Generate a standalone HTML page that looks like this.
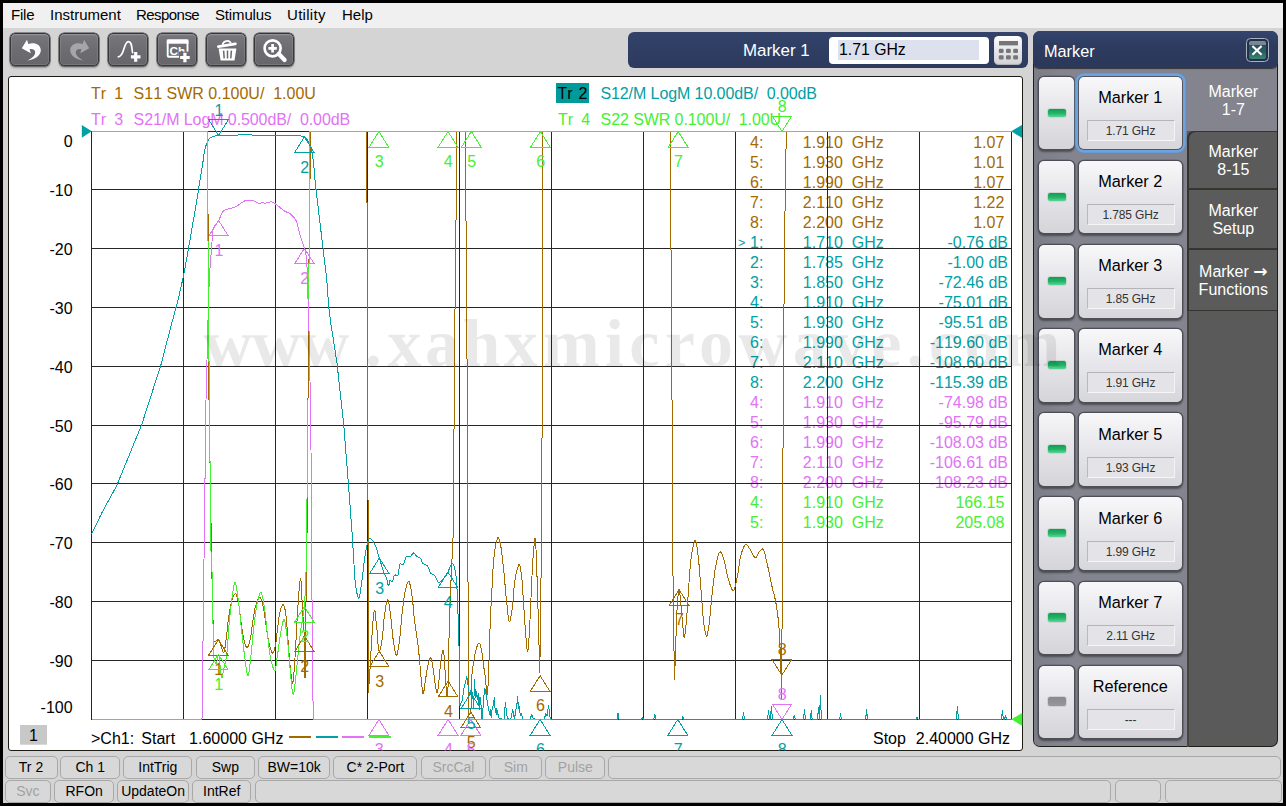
<!DOCTYPE html>
<html><head><meta charset="utf-8"><title>Network Analyzer</title>
<style>
html,body{margin:0;padding:0}
body{width:1286px;height:806px;overflow:hidden;background:#000;position:relative;font-family:"Liberation Sans",Arial,sans-serif;}
.abs{position:absolute}
#app{position:absolute;left:3px;top:3px;width:1280px;height:800px;background:#d4d4d4}
#menubar{position:absolute;left:3px;top:3px;width:1280px;height:25px;background:#f0f0f0}
.mi{position:absolute;top:3px;font-size:15px;line-height:18px;color:#000;white-space:pre}
.tb{position:absolute;top:33px;width:38px;height:31px;border:1px solid #38383c;border-radius:5px;background:linear-gradient(#78787c,#6d6d71 50%,#67676b);box-shadow:0 0 0 .5px #38383c, 0 2px 2px rgba(0,0,0,.3), inset 0 0 0 1px rgba(255,255,255,.1), inset 0 1.5px 0 rgba(255,255,255,.1)}
.tb svg{position:absolute;left:0;top:0}
#entry{position:absolute;left:628px;top:32px;width:399.5px;height:36px;border-radius:6px;background:linear-gradient(#324269,#2c3a5d)}
#entry .lab{position:absolute;left:115px;top:8.5px;font-size:16.9px;line-height:20px;color:#fff;white-space:pre}
#entry .inp{position:absolute;left:200.5px;top:5px;width:160.5px;height:26.5px;border-radius:4px;background:#fff}
#entry .sel{position:absolute;left:9.5px;top:3px;width:141px;height:19.5px;background:#dde1ee}
#entry .val{position:absolute;left:10.5px;top:3px;font-size:15.8px;line-height:20px;color:#000;white-space:pre}
#kp{position:absolute;left:365.5px;top:4.2px;width:28.5px;height:28.5px;border-radius:4.5px;background:linear-gradient(#fdfdfe,#e4e4e8 55%,#d2d2d7);box-shadow:inset 0 -1px 1px rgba(0,0,0,.18)}
#plot{position:absolute;left:8px;top:76px;width:1013px;height:672.8px;border:1px solid #1c1c14;border-radius:3px;background:#fff}
#psvg{position:absolute;left:0;top:0}
#wm{position:absolute;left:203.3px;top:302.5px;font-family:"Liberation Serif","DejaVu Serif",serif;font-weight:bold;font-size:68px;line-height:80px;letter-spacing:5.3px;color:rgba(0,0,0,.085);white-space:pre;z-index:50;pointer-events:none}
#mp{position:absolute;left:1033px;top:31px;width:245px;height:715.7px;border-radius:7px;background:#1e1e18;overflow:hidden}
#mph{position:absolute;left:0;top:0;width:245px;height:36.5px;background:linear-gradient(#34446c,#2d3b5f 40%,#2b385a);border-radius:6px 6px 6px 6px;z-index:3;box-shadow:0 1px 1px rgba(0,0,0,.6)}
#mph .t{position:absolute;left:11px;top:9.5px;font-size:16.3px;line-height:20px;color:#fff}
#mpx{position:absolute;left:213px;top:7px;width:20.5px;height:21.5px;border:1.5px solid #a9b1c1;border-radius:4.5px;background:#22304a}
#mpx i{position:absolute;left:1.5px;top:1.5px;width:17.5px;height:18.5px;border-radius:2px;background:linear-gradient(#7b8b98 0,#76868f 22%,#2a4f5e 24%,#2b5d62 60%,#3a8574)}
#mpl{position:absolute;left:1px;top:30px;width:153px;height:684.7px;background:linear-gradient(90deg,#7d7d88,#84848f 20%,#84848f);border-radius:0 0 0 5px}
#mpr{position:absolute;left:154px;top:30px;width:90px;height:684.7px;background:#5a5a5a;border-radius:0 0 6px 0}
.led{position:absolute;left:6px;width:34.5px;height:72.3px;border-radius:5px;background:linear-gradient(#f6f6f8,#e6e6ea 45%,#d4d4d9);box-shadow:0 0 0 1.3px #4e4e57, 0 1.5px 2px 1px rgba(0,0,0,.4)}
.led i{position:absolute;left:7.8px;top:30.6px;width:18px;height:8.5px;border-radius:3px;border:1px solid #c9d6cf;background:linear-gradient(#139c52,#22b568 55%,#5fd39a)}
.led i.off{background:linear-gradient(#8a8a8e,#98989c);border-color:#d0d0d4}
.mb{position:absolute;left:46px;width:102.5px;height:72.3px;border-radius:5px;background:linear-gradient(#f8f8fa,#e8e8ec 45%,#d6d6db);box-shadow:0 0 0 1.3px #4e4e57, 0 1.5px 2px 1px rgba(0,0,0,.4)}
.mb.foc{box-shadow:0 0 0 1px #55555e, 0 0 0 3.7px #6fa1dc, 0 0 0 4.3px #5b88c0}
.mb .n{position:absolute;left:0;width:100%;top:10.2px;text-align:center;font-size:16.3px;line-height:20px;color:#000}
.mb .v{position:absolute;left:7.5px;top:43.2px;width:88px;height:21px;background:#e4e4e8;border:1px solid;border-color:#b4b4ba #f4f4f6 #f6f6f8 #b8b8be;box-sizing:border-box;text-align:center;font-size:12px;line-height:21px;color:#333;letter-spacing:-0.15px}
.tab{position:absolute;left:155.3px;width:90px;color:#fff;font-size:16px;line-height:18px;text-align:center}
.tab span{position:absolute;left:0;width:100%;text-align:center;white-space:pre}
.sb{position:absolute;height:20.5px;border:1px solid #a8a8a8;border-radius:5px;background:#d8d8d8;box-sizing:content-box;font-size:14px;line-height:20px;text-align:center;color:#000;white-space:pre}
.sb.dis{color:#a2a2a2}
</style></head><body>
<div id="app"></div>
<div id="menubar">
<span class="mi" style="left:8px;letter-spacing:-0.2px">File</span>
<span class="mi" style="left:47px;letter-spacing:0px">Instrument</span>
<span class="mi" style="left:133px;letter-spacing:-0.55px">Response</span>
<span class="mi" style="left:212px;letter-spacing:-0.15px">Stimulus</span>
<span class="mi" style="left:284px;letter-spacing:0.3px">Utility</span>
<span class="mi" style="left:339px;letter-spacing:0px">Help</span>
</div>
<div class="tb" style="left:10.3px"><svg width="40" height="33" viewBox="0 0 40 33"><path d="M10.8 14.3 L16 5.8 L17.3 10 C24 8 29.6 11 29.8 16 C30 21.5 24 25.5 16.3 26.6 C21 24.5 24.3 21.5 24.2 18.3 C24.1 15.6 21.6 14.6 18.6 15.1 L19.8 19.2 Z" fill="#fff"/></svg></div>
<div class="tb" style="left:59.1px"><svg width="40" height="33" viewBox="0 0 40 33"><path d="M29.2 14.3 L24 5.8 L22.7 10 C16 8 10.4 11 10.2 16 C10 21.5 16 25.5 23.7 26.6 C19 24.5 15.7 21.5 15.8 18.3 C15.9 15.6 18.4 14.6 21.4 15.1 L20.2 19.2 Z" fill="#a6a6a8"/></svg></div>
<div class="tb" style="left:107.9px"><svg width="40" height="33" viewBox="0 0 40 33"><path d="M9.3 22.8 C15.5 22.8 14.5 7.6 19.4 7.6 C23.3 7.6 22.5 14 23.6 18.6" fill="none" stroke="#fff" stroke-width="1.7" stroke-linecap="round"/><path d="M21.9 22.9h9.6M26.7 18.1v9.6" stroke="#fff" stroke-width="3.2"/></svg></div>
<div class="tb" style="left:156.7px"><svg width="40" height="33" viewBox="0 0 40 33"><rect x="9.7" y="6.4" width="19.8" height="16.4" rx="1" fill="none" stroke="#fff" stroke-width="1.9"/><rect x="8.8" y="5.5" width="21.6" height="4.2" fill="#fff"/><text x="11.6" y="20.7" font-family="Liberation Sans,Arial,sans-serif" font-weight="bold" font-size="11.8" fill="#fff">Ch</text><rect x="21" y="17.6" width="12" height="12" fill="#6b6b6f"/><path d="M22.1 23.5h9.6M26.9 18.7v9.6" stroke="#fff" stroke-width="3.2"/></svg></div>
<div class="tb" style="left:205.5px"><svg width="40" height="33" viewBox="0 0 40 33"><path d="M11.4 12.6 L28.4 9.8" stroke="#fff" stroke-width="2.8" stroke-linecap="round"/><path d="M15.6 10.8 C16 6.5 22.5 5.6 23.8 9.4" fill="none" stroke="#fff" stroke-width="1.7"/><path d="M11.6 14.4 L29.4 14.4 L27.5 26.5 L13.6 26.5 Z" fill="#fff"/><path d="M16.6 16.6 L17.2 24.4 M20.5 16.6 L20.5 24.4 M24.4 16.6 L23.8 24.4" stroke="#6b6b6f" stroke-width="1.5"/></svg></div>
<div class="tb" style="left:254.3px"><svg width="40" height="33" viewBox="0 0 40 33"><circle cx="17.6" cy="14.3" r="8" fill="none" stroke="#fff" stroke-width="2.7"/><path d="M23.8 20 L29.6 26" stroke="#fff" stroke-width="4.2" stroke-linecap="round"/><path d="M13.4 14.3h8.4M17.6 10.1v8.4" stroke="#fff" stroke-width="2.7"/></svg></div>
<div id="entry"><span class="lab">Marker 1</span><div class="inp"><div class="sel"></div><span class="val">1.71 GHz</span></div><div id="kp"><svg width="29" height="29" viewBox="0 0 29 29"><rect x="5" y="5" width="19" height="4.4" fill="#767678"/>
<rect x="4.8" y="12.7" width="4.8" height="4.2" rx="1.2" fill="#767678"/>
<rect x="12.0" y="12.7" width="4.8" height="4.2" rx="1.2" fill="#767678"/>
<rect x="19.2" y="12.7" width="4.8" height="4.2" rx="1.2" fill="#767678"/>
<rect x="4.8" y="19.3" width="4.8" height="4.2" rx="1.2" fill="#767678"/>
<rect x="12.0" y="19.3" width="4.8" height="4.2" rx="1.2" fill="#767678"/>
<rect x="19.2" y="19.3" width="4.8" height="4.2" rx="1.2" fill="#767678"/>
</svg></div></div>
<div id="plot"></div>
<svg id="psvg" width="1286" height="806" viewBox="0 0 1286 806" font-family="Liberation Sans,Arial,sans-serif" font-size="16" style="font-kerning:none">
<defs><clipPath id="pc"><rect x="9" y="77" width="1013.5" height="673.5"/></clipPath></defs><g clip-path="url(#pc)">
<text x="91" y="98.6" fill="#a36a00" xml:space="preserve">Tr</text><text x="114.3" y="98.6" fill="#a36a00">1</text><text x="133.6" y="98.6" fill="#a36a00" letter-spacing="0" xml:space="preserve">S11 SWR 0.100U/  1.00U</text>
<text x="91" y="125" fill="#e272f6" xml:space="preserve">Tr</text><text x="114.3" y="125" fill="#e272f6">3</text><text x="133.6" y="125" fill="#e272f6" letter-spacing="-0.085" xml:space="preserve">S21/M LogM 0.500dB/  0.00dB</text>
<rect x="556" y="83" width="33" height="20" fill="#009a9a"/>
<text x="557.4" y="98.6" fill="#000">Tr</text><text x="578.4" y="98.6" fill="#000">2</text>
<text x="600.4" y="98.6" fill="#00a0a4" letter-spacing="-0.085" xml:space="preserve">S12/M LogM 10.00dB/  0.00dB</text>
<text x="558" y="125" fill="#44f030" xml:space="preserve">Tr</text><text x="581.3" y="125" fill="#44f030">4</text><text x="600.6" y="125" fill="#44f030" letter-spacing="-0.085" xml:space="preserve">S22 SWR 0.100U/  1.00U</text>
<text x="72.6" y="147.3" text-anchor="end" fill="#000">0</text>
<text x="72.6" y="196.2" text-anchor="end" fill="#000">-10</text>
<text x="72.6" y="255.2" text-anchor="end" fill="#000">-20</text>
<text x="72.6" y="314.2" text-anchor="end" fill="#000">-30</text>
<text x="72.6" y="373.2" text-anchor="end" fill="#000">-40</text>
<text x="72.6" y="432.2" text-anchor="end" fill="#000">-50</text>
<text x="72.6" y="490.2" text-anchor="end" fill="#000">-60</text>
<text x="72.6" y="549.2" text-anchor="end" fill="#000">-70</text>
<text x="72.6" y="608.2" text-anchor="end" fill="#000">-80</text>
<text x="72.6" y="667.2" text-anchor="end" fill="#000">-90</text>
<text x="72.6" y="713.2" text-anchor="end" fill="#000">-100</text>
<text x="750" y="147.7" fill="#a36a00">4:</text><text x="802.8" y="147.7" fill="#a36a00" xml:space="preserve">1.910  GHz</text><text x="1008.8" y="147.7" fill="#a36a00" text-anchor="end" xml:space="preserve">1.07 </text>
<text x="750" y="167.7" fill="#a36a00">5:</text><text x="802.8" y="167.7" fill="#a36a00" xml:space="preserve">1.930  GHz</text><text x="1008.8" y="167.7" fill="#a36a00" text-anchor="end" xml:space="preserve">1.01 </text>
<text x="750" y="187.7" fill="#a36a00">6:</text><text x="802.8" y="187.7" fill="#a36a00" xml:space="preserve">1.990  GHz</text><text x="1008.8" y="187.7" fill="#a36a00" text-anchor="end" xml:space="preserve">1.07 </text>
<text x="750" y="207.8" fill="#a36a00">7:</text><text x="802.8" y="207.8" fill="#a36a00" xml:space="preserve">2.110  GHz</text><text x="1008.8" y="207.8" fill="#a36a00" text-anchor="end" xml:space="preserve">1.22 </text>
<text x="750" y="227.8" fill="#a36a00">8:</text><text x="802.8" y="227.8" fill="#a36a00" xml:space="preserve">2.200  GHz</text><text x="1008.8" y="227.8" fill="#a36a00" text-anchor="end" xml:space="preserve">1.07 </text>
<text x="738" y="246.8" fill="#00a0a4" font-size="12.5">&gt;</text>
<text x="750" y="247.8" fill="#00a0a4">1:</text><text x="802.8" y="247.8" fill="#00a0a4" xml:space="preserve">1.710  GHz</text><text x="1008" y="247.8" fill="#00a0a4" text-anchor="end" xml:space="preserve">-0.76 dB</text>
<text x="750" y="267.8" fill="#00a0a4">2:</text><text x="802.8" y="267.8" fill="#00a0a4" xml:space="preserve">1.785  GHz</text><text x="1008" y="267.8" fill="#00a0a4" text-anchor="end" xml:space="preserve">-1.00 dB</text>
<text x="750" y="287.8" fill="#00a0a4">3:</text><text x="802.8" y="287.8" fill="#00a0a4" xml:space="preserve">1.850  GHz</text><text x="1008" y="287.8" fill="#00a0a4" text-anchor="end" xml:space="preserve">-72.46 dB</text>
<text x="750" y="307.9" fill="#00a0a4">4:</text><text x="802.8" y="307.9" fill="#00a0a4" xml:space="preserve">1.910  GHz</text><text x="1008" y="307.9" fill="#00a0a4" text-anchor="end" xml:space="preserve">-75.01 dB</text>
<text x="750" y="327.9" fill="#00a0a4">5:</text><text x="802.8" y="327.9" fill="#00a0a4" xml:space="preserve">1.930  GHz</text><text x="1008" y="327.9" fill="#00a0a4" text-anchor="end" xml:space="preserve">-95.51 dB</text>
<text x="750" y="347.9" fill="#00a0a4">6:</text><text x="802.8" y="347.9" fill="#00a0a4" xml:space="preserve">1.990  GHz</text><text x="1008" y="347.9" fill="#00a0a4" text-anchor="end" xml:space="preserve">-119.60 dB</text>
<text x="750" y="367.9" fill="#00a0a4">7:</text><text x="802.8" y="367.9" fill="#00a0a4" xml:space="preserve">2.110  GHz</text><text x="1008" y="367.9" fill="#00a0a4" text-anchor="end" xml:space="preserve">-108.60 dB</text>
<text x="750" y="387.9" fill="#00a0a4">8:</text><text x="802.8" y="387.9" fill="#00a0a4" xml:space="preserve">2.200  GHz</text><text x="1008" y="387.9" fill="#00a0a4" text-anchor="end" xml:space="preserve">-115.39 dB</text>
<text x="750" y="408.0" fill="#e272f6">4:</text><text x="802.8" y="408.0" fill="#e272f6" xml:space="preserve">1.910  GHz</text><text x="1008" y="408.0" fill="#e272f6" text-anchor="end" xml:space="preserve">-74.98 dB</text>
<text x="750" y="428.0" fill="#e272f6">5:</text><text x="802.8" y="428.0" fill="#e272f6" xml:space="preserve">1.930  GHz</text><text x="1008" y="428.0" fill="#e272f6" text-anchor="end" xml:space="preserve">-95.79 dB</text>
<text x="750" y="448.0" fill="#e272f6">6:</text><text x="802.8" y="448.0" fill="#e272f6" xml:space="preserve">1.990  GHz</text><text x="1008" y="448.0" fill="#e272f6" text-anchor="end" xml:space="preserve">-108.03 dB</text>
<text x="750" y="468.0" fill="#e272f6">7:</text><text x="802.8" y="468.0" fill="#e272f6" xml:space="preserve">2.110  GHz</text><text x="1008" y="468.0" fill="#e272f6" text-anchor="end" xml:space="preserve">-106.61 dB</text>
<text x="750" y="488.0" fill="#e272f6">8:</text><text x="802.8" y="488.0" fill="#e272f6" xml:space="preserve">2.200  GHz</text><text x="1008" y="488.0" fill="#e272f6" text-anchor="end" xml:space="preserve">-108.23 dB</text>
<text x="750" y="508.1" fill="#44f030">4:</text><text x="802.8" y="508.1" fill="#44f030" xml:space="preserve">1.910  GHz</text><text x="1008.8" y="508.1" fill="#44f030" text-anchor="end" xml:space="preserve">166.15 </text>
<text x="750" y="528.1" fill="#44f030">5:</text><text x="802.8" y="528.1" fill="#44f030" xml:space="preserve">1.930  GHz</text><text x="1008.8" y="528.1" fill="#44f030" text-anchor="end" xml:space="preserve">205.08 </text>
<rect x="20" y="725" width="27" height="19.7" fill="#c8c8c8"/><text x="33.5" y="740.7" text-anchor="middle" fill="#000">1</text>
<text x="91" y="743.8" fill="#000" xml:space="preserve">&gt;Ch1:</text><text x="141.3" y="743.8" fill="#000">Start</text><text x="189.1" y="743.8" fill="#000">1.60000 GHz</text>
<text x="873" y="743.8" fill="#000">Stop</text><text x="915.8" y="743.8" fill="#000">2.40000 GHz</text>
<rect x="289" y="736" width="22" height="2" fill="#a36a00"/>
<rect x="316" y="736" width="22" height="2" fill="#00a0a4"/>
<rect x="342" y="736" width="22" height="2" fill="#e272f6"/>
<rect x="369" y="736" width="22" height="2" fill="#44f030"/>
<path d="M91.50 131.00V720.00M183.50 131.00V720.00M275.50 131.00V720.00M367.50 131.00V720.00M459.50 131.00V720.00M551.50 131.00V720.00M643.50 131.00V720.00M735.50 131.00V720.00M827.50 131.00V720.00M919.50 131.00V720.00M1011.50 131.00V720.00M91.00 131.50H1012.00M91.00 189.50H1012.00M91.00 248.50H1012.00M91.00 307.50H1012.00M91.00 366.50H1012.00M91.00 425.50H1012.00M91.00 483.50H1012.00M91.00 542.50H1012.00M91.00 601.50H1012.00M91.00 660.50H1012.00M91.00 719.50H1012.00" stroke="#262626" stroke-width="1" fill="none" shape-rendering="crispEdges"/>
<polyline points="91.6,131.5 207.0,131.5 207.1,131.7 207.1,132.4 207.2,133.5 207.2,134.9 207.2,136.4 207.3,138.2 207.3,140.1 207.3,141.9 207.4,143.8 207.4,145.5 207.4,147.0 208.4,257.0 209.0,400.0 210.6,500.0 211.5,550.0 212.4,600.0 213.7,642.0 214.6,641.6 216.0,641.0 217.3,640.1 218.4,639.6 219.1,640.1 219.6,641.2 220.1,642.8 220.5,644.5 221.0,646.0 221.6,647.6 222.1,649.3 222.7,651.0 223.2,652.2 223.6,652.7 223.9,652.4 224.3,651.6 224.6,650.4 224.8,648.8 225.1,647.0 225.3,645.2 225.6,643.3 225.8,641.6 226.0,640.0 226.2,638.5 226.4,637.1 226.6,635.6 226.8,634.1 226.9,632.7 227.1,631.2 227.3,629.7 227.4,628.2 227.6,626.8 227.7,625.3 227.9,623.8 228.0,622.3 228.2,620.9 228.4,619.4 228.6,617.9 228.8,616.5 229.0,615.0 229.2,613.6 229.4,612.2 229.6,610.8 229.9,609.5 230.1,608.1 230.4,606.7 230.6,605.3 230.9,604.0 231.3,602.6 231.6,601.3 232.0,600.0 232.5,598.5 233.2,596.8 234.0,595.2 234.8,594.1 235.4,593.6 235.9,594.0 236.5,594.9 236.9,596.3 237.4,598.0 237.8,599.7 238.2,601.5 238.5,603.0 238.8,604.4 239.0,605.9 239.2,607.3 239.4,608.8 239.6,610.2 239.8,611.7 239.9,613.2 240.1,614.7 240.3,616.1 240.4,617.6 240.6,619.1 240.8,620.5 241.0,622.0 241.2,623.4 241.4,624.8 241.6,626.2 241.8,627.6 242.0,629.0 242.2,630.4 242.4,631.8 242.6,633.2 242.9,634.5 243.1,635.9 243.4,637.3 243.7,638.7 244.0,640.0 244.4,641.5 244.8,643.2 245.4,644.8 245.9,646.3 246.5,647.3 247.0,647.7 247.5,647.3 248.1,646.3 248.6,644.8 249.2,643.2 249.6,641.5 250.0,640.0 250.3,638.6 250.6,637.2 250.8,635.8 251.1,634.4 251.3,632.9 251.4,631.5 251.6,630.1 251.8,628.6 252.0,627.2 252.2,625.7 252.3,624.3 252.5,622.9 252.8,621.4 253.0,620.0 253.2,618.6 253.5,617.1 253.7,615.7 254.0,614.2 254.2,612.8 254.5,611.3 254.7,609.9 255.0,608.5 255.3,607.1 255.7,605.7 256.1,604.3 256.5,603.0 257.0,601.6 257.7,600.1 258.4,598.7 259.1,597.7 259.7,597.3 260.3,597.6 260.8,598.5 261.3,599.8 261.8,601.3 262.3,603.0 262.7,604.6 263.0,606.0 263.3,607.4 263.6,608.9 263.9,610.3 264.1,611.8 264.3,613.2 264.6,614.7 264.8,616.2 264.9,617.6 265.1,619.1 265.3,620.6 265.5,622.1 265.8,623.5 266.0,625.0 266.2,626.4 266.5,627.9 266.7,629.3 266.9,630.8 267.1,632.2 267.3,633.6 267.5,635.1 267.8,636.5 268.0,637.9 268.3,639.4 268.6,640.8 268.8,642.2 269.2,643.6 269.5,645.0 269.9,646.6 270.4,648.4 271.0,650.2 271.6,651.8 272.2,652.9 272.7,653.3 273.2,652.9 273.7,651.8 274.3,650.2 274.7,648.4 275.2,646.6 275.5,645.0 275.8,643.6 276.0,642.2 276.2,640.8 276.4,639.4 276.6,637.9 276.7,636.5 276.9,635.1 277.0,633.6 277.2,632.2 277.3,630.7 277.5,629.3 277.6,627.9 277.8,626.4 278.0,625.0 278.2,623.6 278.4,622.2 278.6,620.9 278.7,619.5 278.9,618.1 279.1,616.7 279.4,615.4 279.6,614.0 279.9,612.6 280.2,611.3 280.5,610.0 280.9,608.7 281.4,607.2 282.0,605.9 282.5,604.9 283.0,604.5 283.5,604.9 284.0,605.9 284.5,607.3 284.9,608.9 285.2,610.6 285.5,612.0 285.7,613.4 285.9,614.9 286.1,616.3 286.3,617.8 286.4,619.3 286.6,620.7 286.7,622.2 286.8,623.7 286.9,625.2 287.0,626.6 287.2,628.1 287.3,629.6 287.3,631.1 287.4,632.6 287.5,634.1 287.7,635.6 287.8,637.0 287.9,638.5 288.0,640.0 288.1,641.4 288.2,642.9 288.4,644.3 288.5,645.7 288.6,647.1 288.7,648.6 288.8,650.0 288.9,651.4 289.0,652.9 289.1,654.3 289.2,655.7 289.3,657.2 289.4,658.6 289.5,660.0 289.7,661.4 289.8,662.9 289.9,664.3 290.1,665.7 290.2,667.2 290.3,668.6 290.5,670.0 290.7,671.5 290.9,673.1 291.1,674.9 291.3,676.7 291.5,678.4 291.8,680.0 292.0,681.4 292.2,682.5 292.4,683.2 292.6,683.5 292.8,683.3 292.9,682.7 293.1,681.8 293.3,680.5 293.4,679.1 293.6,677.4 293.7,675.7 293.9,673.8 294.0,671.9 294.1,670.0 294.3,668.2 294.4,666.5 294.5,665.0 294.6,663.5 294.7,662.1 294.8,660.6 294.9,659.1 295.0,657.7 295.1,656.2 295.2,654.7 295.3,653.2 295.3,651.8 295.4,650.3 295.5,648.8 295.6,647.4 295.7,645.9 295.8,644.4 295.8,642.9 295.9,641.5 296.0,640.0 296.1,638.5 296.2,637.1 296.2,635.6 296.3,634.2 296.4,632.7 296.5,631.2 296.6,629.8 296.6,628.3 296.7,626.9 296.8,625.4 296.9,624.0 296.9,622.5 297.0,621.0 297.1,619.6 297.2,618.1 297.3,616.7 297.3,615.2 297.4,613.7 297.5,612.3 297.6,610.8 297.7,609.4 297.8,607.9 297.9,606.5 298.0,605.0 298.1,603.4 298.2,601.7 298.4,599.9 298.5,598.1 298.6,596.1 298.8,594.2 298.9,592.2 299.1,590.3 299.2,588.4 299.4,586.6 299.5,584.9 299.7,583.3 299.8,581.9 300.0,580.7 300.1,579.8 300.3,579.0 300.4,578.6 300.5,578.4 300.6,578.5 300.7,578.9 300.8,579.5 300.9,580.3 301.0,581.3 301.1,582.5 301.2,583.8 301.3,585.2 301.4,586.8 301.5,588.5 301.6,590.3 301.6,592.1 301.7,593.9 301.8,595.9 301.9,597.8 302.0,599.7 302.1,601.6 302.1,603.4 302.2,605.2 302.3,606.9 302.4,608.5 302.5,610.0 302.6,611.4 302.7,612.9 302.8,614.3 302.9,615.7 303.0,617.1 303.1,618.6 303.2,620.0 303.3,621.4 303.4,622.9 303.5,624.3 303.6,625.7 303.7,627.1 303.8,628.6 303.9,630.0 304.0,631.4 304.1,632.9 304.2,634.3 304.2,635.7 304.3,637.1 304.4,638.6 304.4,640.0 304.4,641.5 304.5,643.1 304.5,644.8 304.5,646.6 304.6,648.4 304.6,650.3 304.6,652.2 304.6,654.2 304.7,656.1 304.7,658.1 304.7,660.0 304.7,661.9 304.8,663.7 304.8,665.5 304.8,667.3 304.8,668.9 304.8,670.5 304.8,671.9 304.9,673.2 304.9,674.4 304.9,675.5 304.9,676.3 304.9,677.0 305.0,677.6 305.0,677.9 305.0,678.0 305.0,677.9 305.0,677.6 305.1,677.0 305.1,676.3 305.1,675.5 305.1,674.4 305.1,673.2 305.2,671.9 305.2,670.5 305.2,668.9 305.2,667.3 305.2,665.5 305.3,663.7 305.3,661.9 305.3,660.0 305.3,658.1 305.3,656.1 305.3,654.2 305.4,652.2 305.4,650.3 305.4,648.4 305.4,646.6 305.4,644.8 305.5,643.1 305.5,641.5 305.5,640.0 306.7,550.0 307.6,500.0 308.0,400.0 309.0,260.0 310.2,165.0 310.2,163.5 310.2,161.9 310.2,160.1 310.2,158.3 310.2,156.5 310.3,154.6 310.3,152.6 310.3,150.7 310.3,148.8 310.3,146.9 310.3,145.0 310.3,143.2 310.3,141.4 310.3,139.8 310.3,138.2 310.3,136.8 310.3,135.5 310.3,134.3 310.3,133.4 310.4,132.6 310.4,132.0 310.4,131.6 310.4,131.5 366.8,131.5 367.3,300.0 368.0,500.0 368.4,692.6 368.4,692.3 368.5,691.5 368.6,690.3 368.7,688.7 368.8,687.0 368.9,685.1 369.1,683.3 369.2,681.5 369.3,680.0 369.4,678.6 369.5,677.2 369.6,675.8 369.7,674.4 369.8,673.0 369.9,671.6 369.9,670.2 370.0,668.8 370.1,667.4 370.2,666.0 370.3,664.5 370.4,663.0 370.5,661.6 370.5,660.1 370.6,658.6 370.7,657.1 370.8,655.7 370.9,654.2 370.9,652.7 371.0,651.2 371.1,649.8 371.2,648.3 371.2,646.8 371.3,645.3 371.4,643.8 371.5,642.4 371.6,640.9 371.7,639.4 371.8,637.9 371.9,636.5 372.0,635.0 372.1,633.5 372.2,631.8 372.4,630.0 372.5,628.1 372.6,626.2 372.8,624.3 372.9,622.4 373.1,620.5 373.3,618.7 373.4,616.9 373.6,615.4 373.7,613.9 373.9,612.7 374.1,611.7 374.3,610.9 374.4,610.5 374.6,610.3 374.8,610.6 375.0,611.4 375.2,612.5 375.4,614.1 375.5,615.8 375.7,617.7 375.9,619.7 376.1,621.6 376.3,623.4 376.5,625.0 376.7,626.5 376.8,628.2 377.0,630.0 377.1,631.8 377.3,633.8 377.4,635.7 377.5,637.7 377.6,639.6 377.8,641.4 377.9,643.2 378.1,644.9 378.2,646.4 378.4,647.8 378.5,649.0 378.7,650.0 378.9,650.7 379.1,651.1 379.3,651.3 379.6,651.0 379.9,650.1 380.3,648.7 380.7,647.1 381.1,645.2 381.4,643.4 381.7,641.6 382.0,640.0 382.2,638.5 382.4,637.1 382.6,635.6 382.7,634.2 382.9,632.7 383.0,631.2 383.1,629.7 383.2,628.3 383.3,626.8 383.5,625.3 383.6,623.8 383.7,622.3 383.8,620.9 384.0,619.4 384.1,617.9 384.3,616.5 384.5,615.0 384.7,613.5 385.0,611.7 385.2,609.9 385.5,608.0 385.8,606.1 386.2,604.4 386.5,602.8 386.8,601.4 387.1,600.3 387.4,599.6 387.7,599.4 388.0,599.6 388.2,600.3 388.5,601.4 388.8,602.8 389.1,604.4 389.3,606.1 389.6,608.0 389.8,609.9 390.1,611.7 390.3,613.5 390.5,615.0 390.7,616.4 390.9,617.8 391.0,619.3 391.2,620.7 391.3,622.1 391.5,623.5 391.6,624.9 391.8,626.4 391.9,627.8 392.0,629.2 392.2,630.7 392.3,632.1 392.4,633.5 392.6,634.9 392.8,636.3 392.9,637.8 393.1,639.2 393.3,640.6 393.5,642.0 393.7,643.5 394.0,645.1 394.3,646.9 394.5,648.7 394.9,650.4 395.2,652.0 395.5,653.4 395.8,654.4 396.1,655.1 396.4,655.4 396.7,655.2 397.0,654.5 397.3,653.4 397.6,652.1 397.9,650.5 398.2,648.7 398.5,646.9 398.8,645.0 399.1,643.2 399.3,641.5 399.5,640.0 399.7,638.6 399.9,637.2 400.0,635.7 400.2,634.3 400.3,632.9 400.5,631.5 400.6,630.0 400.8,628.6 400.9,627.2 401.0,625.7 401.1,624.3 401.2,622.9 401.4,621.4 401.5,620.0 401.6,618.6 401.7,617.1 401.9,615.7 402.0,614.3 402.2,612.9 402.3,611.4 402.5,610.0 402.7,608.6 402.8,607.1 403.0,605.7 403.2,604.2 403.4,602.8 403.6,601.4 403.8,599.9 404.0,598.5 404.2,597.1 404.4,595.6 404.7,594.2 404.9,592.8 405.2,591.4 405.5,590.0 405.8,588.6 406.2,587.0 406.7,585.3 407.2,583.8 407.7,582.5 408.2,581.6 408.6,581.3 409.0,581.6 409.4,582.5 409.8,583.7 410.2,585.3 410.6,587.0 410.9,588.8 411.2,590.5 411.5,592.0 411.7,593.5 411.9,594.9 412.1,596.4 412.3,597.8 412.5,599.3 412.7,600.8 412.8,602.3 412.9,603.7 413.1,605.2 413.2,606.7 413.3,608.2 413.5,609.7 413.6,611.1 413.7,612.6 413.9,614.1 414.0,615.6 414.2,617.1 414.3,618.5 414.5,620.0 414.7,621.5 414.9,622.9 415.1,624.4 415.3,625.9 415.5,627.4 415.7,628.8 415.9,630.3 416.1,631.8 416.3,633.2 416.5,634.7 416.8,636.2 417.0,637.6 417.2,639.1 417.4,640.6 417.6,642.0 417.8,643.5 418.0,645.0 418.2,646.5 418.3,647.9 418.5,649.4 418.7,650.9 418.8,652.3 418.9,653.8 419.1,655.2 419.2,656.7 419.3,658.1 419.5,659.6 419.6,661.1 419.7,662.5 419.8,664.0 420.0,665.4 420.1,666.9 420.2,668.3 420.3,669.8 420.5,671.3 420.6,672.7 420.7,674.2 420.9,675.6 421.0,677.1 421.1,678.5 421.3,680.0 421.5,681.5 421.6,683.3 421.8,685.2 422.0,687.0 422.1,688.9 422.3,690.6 422.5,692.0 422.7,693.2 422.9,693.9 423.1,694.2 423.3,693.9 423.5,693.2 423.8,692.0 424.0,690.6 424.3,688.9 424.5,687.0 424.8,685.2 425.0,683.3 425.3,681.5 425.5,680.0 425.7,678.6 425.9,677.3 426.1,675.9 426.3,674.5 426.5,673.1 426.7,671.8 426.9,670.4 427.2,669.0 427.4,667.7 427.7,666.3 428.0,665.0 428.3,663.6 428.8,662.0 429.3,660.5 429.7,659.1 430.2,658.2 430.6,657.8 431.0,658.2 431.4,659.2 431.8,660.7 432.1,662.5 432.4,664.5 432.7,666.4 433.0,668.0 433.2,669.4 433.4,670.8 433.6,672.1 433.8,673.5 434.0,674.9 434.2,676.3 434.3,677.7 434.5,679.1 434.7,680.5 434.8,681.9 435.0,683.2 435.3,684.6 435.5,686.0 435.8,687.5 436.1,689.3 436.5,690.9 436.8,692.1 437.1,692.6 437.4,692.3 437.6,691.5 437.8,690.3 438.0,688.7 438.3,687.0 438.5,685.1 438.6,683.3 438.8,681.5 439.0,680.0 439.2,678.6 439.3,677.1 439.5,675.7 439.6,674.3 439.7,672.9 439.8,671.4 439.9,670.0 440.1,668.5 440.2,667.1 440.3,665.7 440.5,664.3 440.6,662.8 440.8,661.4 441.0,660.0 441.2,658.5 441.5,656.7 441.9,654.9 442.2,653.2 442.6,651.7 442.9,650.8 443.1,650.4 443.3,650.6 443.5,651.1 443.6,652.0 443.8,653.1 443.9,654.5 444.1,656.1 444.2,657.7 444.3,659.5 444.4,661.4 444.5,663.3 444.7,665.1 444.8,666.9 444.9,668.5 445.0,670.0 445.1,671.5 445.2,673.1 445.3,674.9 445.5,676.7 445.6,678.6 445.7,680.5 445.8,682.4 445.9,684.3 446.0,686.2 446.1,687.9 446.2,689.7 446.3,691.3 446.4,692.7 446.5,694.0 446.6,695.1 446.7,696.0 446.8,696.7 446.9,697.2 447.0,697.3 447.1,697.1 447.2,696.4 447.4,695.4 447.5,694.1 447.6,692.5 447.7,690.8 447.9,689.0 448.0,687.1 448.1,685.1 448.2,683.3 448.2,681.6 448.3,680.0 449.3,619.6 451.1,578.5 453.4,530.0 454.2,400.0 455.1,300.0 456.7,160.0 456.7,158.5 456.7,156.9 456.7,155.2 456.7,153.4 456.8,151.5 456.8,149.7 456.8,147.8 456.8,145.9 456.8,144.0 456.8,142.2 456.8,140.4 456.8,138.8 456.8,137.3 456.8,135.9 456.9,134.6 456.9,133.6 456.9,132.7 456.9,132.0 457.0,131.6 457.0,131.5 457.7,131.5 459.2,131.5 461.3,131.5 463.3,131.5 464.9,131.5 465.5,131.5 465.7,200.0 466.6,260.0 467.5,480.0 468.5,680.0 468.5,681.5 468.5,683.1 468.5,684.9 468.5,686.6 468.5,688.5 468.6,690.4 468.6,692.3 468.6,694.3 468.6,696.2 468.6,698.1 468.6,700.0 468.6,701.9 468.6,703.7 468.7,705.4 468.7,707.0 468.7,708.5 468.7,709.9 468.8,711.2 468.8,712.3 468.8,713.2 468.9,714.0 468.9,714.5 468.9,714.9 469.0,715.0 469.5,714.5 470.3,713.2 470.8,712.0 470.9,710.7 471.0,709.3 471.0,707.9 471.1,706.5 471.1,705.1 471.2,703.7 471.2,702.3 471.2,700.8 471.2,699.3 471.3,697.9 471.3,696.4 471.3,694.9 471.3,693.4 471.3,691.9 471.3,690.4 471.4,688.9 471.4,687.4 471.4,685.9 471.5,684.4 471.5,682.9 471.5,681.5 471.6,680.0 471.7,678.6 471.8,677.1 471.9,675.7 472.0,674.3 472.2,672.8 472.3,671.4 472.5,670.0 472.7,668.5 472.9,667.1 473.1,665.7 473.3,664.3 473.6,662.8 473.8,661.4 474.0,660.0 474.2,658.7 474.4,657.3 474.7,655.9 474.9,654.6 475.2,653.2 475.5,651.9 475.8,650.6 476.1,649.3 476.5,648.0 477.0,646.5 477.7,644.8 478.5,643.4 479.1,642.9 479.7,643.4 480.2,644.7 480.7,646.5 481.2,648.3 481.5,650.0 481.8,651.3 482.0,652.7 482.2,654.0 482.4,655.4 482.5,656.8 482.7,658.1 482.8,659.5 483.0,660.9 483.2,662.3 483.3,663.6 483.5,665.0 483.7,666.4 483.9,667.7 484.1,669.1 484.3,670.5 484.5,671.8 484.7,673.2 484.9,674.5 485.1,675.9 485.3,677.3 485.4,678.6 485.6,680.0 485.7,681.5 485.9,683.1 486.0,684.9 486.1,686.7 486.3,688.5 486.4,690.2 486.5,691.8 486.6,693.1 486.8,694.1 486.9,694.8 487.0,695.0 487.1,694.8 487.3,694.1 487.4,693.1 487.6,691.8 487.7,690.2 487.8,688.5 488.0,686.7 488.1,684.9 488.2,683.1 488.3,681.5 488.4,680.0 490.3,619.6 493.1,567.3 493.2,565.9 493.3,564.4 493.4,563.0 493.6,561.6 493.7,560.2 493.8,558.7 494.0,557.3 494.1,555.9 494.3,554.4 494.5,553.0 494.6,551.6 494.8,550.2 495.0,548.8 495.3,547.4 495.5,546.0 495.8,544.4 496.2,542.5 496.7,540.7 497.2,539.1 497.6,537.9 498.1,537.5 498.6,537.9 499.0,539.1 499.5,540.7 500.0,542.5 500.4,544.4 500.7,546.0 501.0,547.4 501.2,548.8 501.4,550.2 501.6,551.6 501.8,553.0 502.0,554.5 502.2,555.9 502.3,557.3 502.5,558.7 502.6,560.2 502.8,561.6 502.9,563.0 503.1,564.4 503.2,565.9 503.4,567.3 503.6,568.8 503.7,570.3 503.9,571.8 504.0,573.2 504.1,574.7 504.3,576.2 504.4,577.7 504.5,579.2 504.7,580.7 504.8,582.2 504.9,583.7 505.1,585.1 505.2,586.6 505.3,588.1 505.5,589.6 505.6,591.1 505.7,592.6 505.9,594.1 506.0,595.5 506.2,597.0 506.3,598.5 506.5,600.0 506.7,601.5 506.8,603.2 507.0,605.1 507.2,607.0 507.4,608.9 507.6,610.8 507.8,612.7 507.9,614.5 508.2,616.2 508.4,617.8 508.6,619.1 508.8,620.2 509.0,621.1 509.3,621.6 509.5,621.8 509.7,621.5 510.0,620.8 510.3,619.6 510.6,618.2 510.9,616.6 511.2,614.8 511.5,613.1 511.8,611.4 512.0,610.0 512.2,608.6 512.4,607.2 512.5,605.7 512.7,604.3 512.8,602.9 513.0,601.4 513.1,600.0 513.2,598.6 513.3,597.1 513.4,595.7 513.5,594.3 513.6,592.8 513.7,591.4 513.9,589.9 514.0,588.5 514.1,587.1 514.3,585.7 514.4,584.2 514.6,582.8 514.8,581.4 515.0,580.0 515.3,578.5 515.6,576.7 515.9,574.9 516.3,573.0 516.8,571.2 517.2,569.4 517.6,567.8 518.1,566.5 518.5,565.4 518.9,564.7 519.2,564.5 519.5,564.7 519.8,565.4 520.1,566.5 520.4,567.8 520.7,569.4 520.9,571.2 521.2,573.0 521.4,574.9 521.6,576.8 521.8,578.5 522.0,580.0 525.0,625.0 525.1,626.5 525.3,628.2 525.4,630.0 525.5,631.9 525.7,633.8 525.8,635.7 526.0,637.7 526.1,639.6 526.3,641.4 526.4,643.2 526.6,644.9 526.7,646.4 526.9,647.8 527.0,649.0 527.2,650.0 527.3,650.7 527.5,651.1 527.6,651.3 527.7,651.2 527.9,650.8 528.0,650.1 528.1,649.2 528.2,648.2 528.4,646.9 528.5,645.5 528.6,643.9 528.7,642.3 528.9,640.5 529.0,638.6 529.1,636.7 529.2,634.7 529.3,632.8 529.4,630.8 529.5,628.8 529.6,626.9 529.7,625.0 529.8,623.2 529.9,621.6 530.0,620.0 532.5,565.0 532.6,563.4 532.7,561.7 532.8,559.9 533.0,558.1 533.1,556.1 533.3,554.2 533.4,552.2 533.6,550.3 533.8,548.4 533.9,546.6 534.1,544.9 534.2,543.3 534.4,541.9 534.6,540.7 534.7,539.8 534.8,539.0 535.0,538.6 535.1,538.4 535.2,538.6 535.3,539.1 535.4,540.0 535.5,541.1 535.6,542.4 535.7,543.9 535.8,545.6 535.9,547.4 536.0,549.3 536.1,551.2 536.2,553.1 536.3,555.0 536.4,556.8 536.4,558.5 536.5,560.0 537.9,604.7 539.8,672.8 540.7,604.7 541.6,530.0 542.2,400.0 542.8,131.5 670.4,131.5 671.0,250.0 672.0,400.0 672.4,530.0 674.4,680.0 674.4,679.9 674.5,679.5 674.5,678.9 674.6,678.0 674.6,677.0 674.6,675.8 674.7,674.4 674.8,673.0 674.8,671.3 674.9,669.6 674.9,667.8 675.0,666.0 675.0,664.1 675.1,662.2 675.2,660.3 675.2,658.4 675.3,656.6 675.3,654.8 675.4,653.1 675.4,651.5 675.5,650.0 677.0,610.0 677.1,608.4 677.2,606.7 677.3,604.9 677.5,603.0 677.6,601.0 677.8,599.1 677.9,597.2 678.1,595.5 678.2,593.9 678.4,592.5 678.6,591.3 678.8,590.4 678.9,589.8 679.1,589.6 679.3,589.8 679.4,590.5 679.6,591.6 679.8,592.9 680.0,594.5 680.2,596.3 680.3,598.1 680.5,600.0 680.7,601.8 680.9,603.5 681.0,605.0 681.1,606.4 681.3,607.9 681.4,609.3 681.5,610.7 681.6,612.1 681.7,613.6 681.8,615.0 682.0,616.4 682.1,617.9 682.2,619.3 682.3,620.7 682.4,622.1 682.6,623.6 682.7,625.0 682.8,626.5 683.0,628.2 683.2,630.0 683.4,631.8 683.5,633.5 683.7,634.9 683.9,636.1 684.1,636.9 684.3,637.2 684.5,636.9 684.7,636.1 684.9,634.9 685.1,633.5 685.3,631.8 685.5,630.0 685.7,628.2 685.9,626.5 686.0,625.0 686.1,623.5 686.3,622.1 686.4,620.6 686.5,619.2 686.6,617.7 686.8,616.3 686.9,614.8 687.0,613.4 687.1,611.9 687.2,610.4 687.3,609.0 687.3,607.5 687.4,606.1 687.5,604.6 687.6,603.1 687.7,601.7 687.8,600.2 687.9,598.8 688.0,597.3 688.1,595.8 688.2,594.4 688.3,592.9 688.4,591.5 688.5,590.0 688.6,588.5 688.7,587.1 688.8,585.6 688.9,584.2 689.0,582.7 689.1,581.2 689.2,579.8 689.3,578.3 689.4,576.8 689.5,575.4 689.6,573.9 689.7,572.4 689.9,571.0 690.0,569.5 690.1,568.0 690.2,566.6 690.4,565.1 690.5,563.7 690.6,562.2 690.8,560.8 691.0,559.3 691.1,557.9 691.3,556.4 691.5,555.0 691.7,553.6 692.0,551.9 692.3,550.2 692.6,548.4 693.0,546.7 693.4,545.0 693.8,543.5 694.2,542.3 694.5,541.3 694.9,540.6 695.2,540.4 695.5,540.7 695.8,541.4 696.2,542.6 696.5,544.1 696.8,545.9 697.1,547.7 697.3,549.7 697.6,551.6 697.8,553.4 698.0,555.0 698.2,556.4 698.3,557.9 698.5,559.3 698.7,560.8 698.8,562.3 698.9,563.7 699.1,565.2 699.2,566.6 699.3,568.1 699.4,569.5 699.6,571.0 699.7,572.5 699.8,573.9 699.9,575.4 700.0,576.8 700.1,578.3 700.2,579.8 700.3,581.2 700.4,582.7 700.5,584.2 700.6,585.6 700.8,587.1 700.9,588.5 701.0,590.0 701.1,591.5 701.2,592.9 701.4,594.4 701.5,595.8 701.6,597.3 701.7,598.8 701.8,600.2 701.9,601.7 702.0,603.2 702.1,604.6 702.2,606.1 702.3,607.6 702.4,609.0 702.5,610.5 702.6,611.9 702.7,613.4 702.9,614.9 703.0,616.3 703.2,617.8 703.3,619.2 703.5,620.7 703.6,622.1 703.8,623.6 704.0,625.0 704.2,626.6 704.5,628.3 704.8,630.2 705.2,632.0 705.5,633.6 705.9,635.0 706.3,635.9 706.6,636.2 706.9,635.9 707.2,635.0 707.6,633.6 707.9,632.0 708.2,630.2 708.5,628.3 708.8,626.6 709.0,625.0 709.2,623.6 709.4,622.2 709.6,620.7 709.7,619.3 709.9,617.9 710.0,616.5 710.2,615.0 710.3,613.6 710.4,612.2 710.5,610.7 710.7,609.3 710.8,607.9 710.9,606.4 711.0,605.0 711.2,603.6 711.3,602.1 711.4,600.7 711.5,599.3 711.7,597.9 711.8,596.4 712.0,595.0 712.2,593.6 712.3,592.1 712.5,590.7 712.6,589.3 712.8,587.8 712.9,586.4 713.1,584.9 713.3,583.5 713.4,582.1 713.6,580.6 713.8,579.2 714.0,577.8 714.1,576.3 714.3,574.9 714.5,573.5 714.8,572.0 715.0,570.6 715.2,569.2 715.5,567.8 715.7,566.4 716.0,565.0 716.3,563.5 716.6,561.9 717.0,560.2 717.4,558.4 717.9,556.7 718.3,555.2 718.8,553.8 719.3,552.7 719.8,552.0 720.3,551.8 720.9,552.2 721.5,553.3 722.2,554.8 722.9,556.6 723.5,558.4 724.0,560.0 724.4,561.3 724.8,562.7 725.1,564.1 725.4,565.5 725.6,566.9 725.9,568.3 726.2,569.7 726.4,571.1 726.7,572.5 727.0,573.9 727.3,575.3 727.6,576.6 728.0,578.0 728.4,579.4 728.9,581.0 729.4,582.7 730.0,584.4 730.5,586.0 731.1,587.6 731.7,588.9 732.2,589.9 732.7,590.6 733.2,590.8 733.7,590.5 734.1,589.7 734.6,588.4 735.1,586.9 735.5,585.1 735.9,583.2 736.3,581.4 736.7,579.6 737.0,578.0 737.3,576.6 737.6,575.1 737.8,573.7 738.1,572.2 738.3,570.8 738.5,569.3 738.7,567.9 738.9,566.4 739.1,564.9 739.3,563.5 739.5,562.0 739.8,560.6 740.0,559.2 740.3,557.8 740.6,556.4 741.0,555.0 741.4,553.5 741.9,551.8 742.5,550.0 743.2,548.3 743.9,546.8 744.6,545.5 745.3,544.7 746.1,544.4 746.9,544.8 747.8,545.8 748.7,547.2 749.6,548.7 750.5,550.0 751.3,551.2 752.0,552.6 752.7,554.1 753.4,555.5 754.1,556.7 754.8,557.5 755.5,557.8 756.2,557.4 756.8,556.2 757.5,554.8 758.2,553.3 759.0,552.0 759.8,551.0 760.8,550.0 761.7,549.2 762.4,548.9 763.0,549.2 763.6,549.9 764.1,550.9 764.5,552.3 764.9,553.9 765.3,555.6 765.7,557.4 766.0,559.2 766.3,560.8 766.7,562.3 767.1,563.7 767.4,565.1 767.7,566.4 768.1,567.8 768.4,569.2 768.7,570.6 769.0,572.0 769.3,573.4 769.6,574.8 769.8,576.2 770.1,577.6 770.4,579.0 770.7,580.4 771.0,581.8 771.3,583.2 771.6,584.6 771.9,586.0 772.2,587.4 772.6,588.8 772.9,590.2 773.3,591.6 773.6,592.9 774.0,594.3 774.3,595.7 774.6,597.1 775.0,598.5 775.3,599.9 775.6,601.3 775.9,602.7 776.1,604.1 776.4,605.5 776.6,606.9 776.8,608.3 777.0,609.7 777.2,611.1 777.4,612.5 777.6,613.9 777.7,615.3 777.9,616.7 778.1,618.1 778.2,619.5 778.4,620.9 778.5,622.3 778.6,623.7 778.8,625.1 778.9,626.5 779.0,627.9 779.1,629.3 779.2,630.7 779.3,632.2 779.4,633.7 779.5,635.1 779.5,636.6 779.6,638.0 779.7,639.5 779.8,640.9 779.8,642.4 779.9,643.8 779.9,645.3 780.0,646.7 780.1,648.2 780.1,649.6 780.2,651.1 780.2,652.5 780.3,654.0 780.4,655.4 780.4,656.8 780.5,658.2 780.5,659.7 780.6,661.1 780.6,662.5 780.7,663.9 780.7,665.3 780.8,666.7 780.8,668.1 780.9,669.5 780.9,671.0 780.9,672.4 781.0,673.8 781.0,675.2 781.0,676.8 781.0,678.5 781.1,680.3 781.1,682.2 781.1,684.1 781.1,686.1 781.1,688.0 781.1,689.9 781.1,691.7 781.1,693.3 781.1,694.8 781.2,696.1 781.2,697.2 781.2,698.0 781.2,698.5 781.2,698.7 781.8,650.0 782.3,600.0 783.0,450.0 784.4,250.0 786.3,131.5 1011.5,131.5" fill="none" stroke="#a36a00" stroke-width="1" stroke-linejoin="round" shape-rendering="crispEdges"/>
<polyline points="91.6,534.0 92.2,532.7 92.9,531.3 93.5,530.0 94.1,528.7 94.8,527.3 95.4,526.0 96.0,524.7 96.7,523.4 97.3,522.0 98.0,520.7 98.6,519.4 99.3,518.1 99.9,516.8 100.6,515.4 101.3,514.1 101.9,512.8 102.6,511.5 103.3,510.2 103.9,508.9 104.6,507.7 105.3,506.4 106.0,505.1 106.7,503.9 107.4,502.6 108.1,501.3 108.8,500.1 109.5,498.8 110.2,497.5 110.9,496.3 111.6,495.0 112.3,493.7 113.0,492.5 113.7,491.2 114.4,489.9 115.0,488.7 115.7,487.4 116.3,486.1 117.0,484.8 117.6,483.5 141.8,424.4 160.8,365.3 172.6,320.0 173.0,318.6 173.4,317.1 173.7,315.7 174.1,314.3 174.5,312.9 174.9,311.4 175.3,310.0 175.7,308.6 176.1,307.2 176.4,305.7 176.8,304.3 177.2,302.9 177.5,301.4 177.9,300.0 178.3,298.6 178.6,297.1 179.0,295.7 179.3,294.2 179.6,292.8 180.0,291.3 180.3,289.9 180.7,288.4 181.0,287.0 181.3,285.5 181.6,284.0 182.0,282.6 182.3,281.1 182.6,279.7 182.9,278.2 183.2,276.8 183.5,275.3 183.8,273.9 184.1,272.5 184.3,271.0 184.6,269.6 184.9,268.2 185.2,266.8 185.4,265.4 185.7,263.9 186.0,262.5 186.2,261.1 186.5,259.7 186.7,258.2 187.0,256.8 187.2,255.4 187.5,254.0 187.7,252.5 188.0,251.1 188.2,249.7 188.5,248.3 188.7,246.8 189.0,245.4 189.2,244.0 189.5,242.6 189.7,241.1 190.0,239.7 197.4,197.0 197.6,195.6 197.8,194.1 198.0,192.7 198.2,191.2 198.4,189.8 198.7,188.3 198.9,186.9 199.1,185.4 199.3,184.0 199.5,182.6 199.8,181.1 200.0,179.7 200.3,178.2 200.5,176.8 200.8,175.4 201.0,173.9 201.3,172.5 201.6,171.0 201.8,169.6 202.0,168.2 202.3,166.7 202.5,165.3 202.7,163.8 202.9,162.3 203.1,160.9 203.3,159.4 203.5,158.0 203.7,156.5 203.9,155.1 204.1,153.7 204.4,152.2 204.7,150.8 205.0,149.4 205.3,148.0 205.7,146.6 206.1,145.1 206.6,143.7 207.2,142.3 207.9,141.0 208.6,139.8 209.3,138.9 210.2,138.0 211.3,137.2 212.3,136.7 213.5,136.3 214.7,136.0 216.0,135.7 217.3,135.5 218.6,135.4 220.1,135.3 221.5,135.3 223.0,135.2 224.5,135.2 225.9,135.1 227.4,135.1 228.9,135.1 230.4,135.1 231.9,135.1 233.3,135.0 234.8,135.0 236.3,135.0 237.8,135.0 239.3,134.9 240.7,134.9 242.2,134.8 243.4,134.7 244.7,134.5 245.9,134.4 247.2,134.3 248.4,134.2 249.6,134.3 250.9,134.6 252.1,135.0 253.4,135.3 254.6,135.4 256.1,135.4 257.5,135.4 259.0,135.4 260.5,135.4 261.9,135.4 263.4,135.4 264.9,135.4 266.3,135.4 267.8,135.4 269.3,135.4 270.8,135.4 272.3,135.4 273.7,135.4 275.2,135.4 276.7,135.4 278.2,135.4 279.7,135.4 281.1,135.4 282.6,135.4 284.1,135.4 285.6,135.4 287.0,135.4 288.5,135.4 290.0,135.4 291.5,135.4 292.9,135.4 294.4,135.4 295.9,135.4 297.4,135.5 299.0,135.7 300.5,136.0 301.9,136.2 303.2,136.5 304.4,136.9 305.4,137.4 306.3,138.3 307.2,139.5 308.0,140.7 308.8,142.1 309.4,143.5 310.0,144.8 310.5,146.0 310.9,147.2 311.2,148.4 311.6,149.7 311.9,150.9 312.1,152.2 312.3,153.6 312.6,155.1 312.8,156.5 312.9,158.0 313.1,159.4 313.3,160.9 313.4,162.3 313.6,163.8 313.7,165.2 313.8,166.7 314.0,168.1 314.1,169.6 314.2,171.1 314.4,172.6 314.5,174.1 314.6,175.5 314.7,177.0 314.9,178.5 315.0,180.0 315.1,181.5 315.3,182.9 315.4,184.4 315.6,185.8 315.8,187.3 315.9,188.7 316.1,190.2 316.3,191.6 316.4,193.1 316.6,194.5 326.8,280.0 326.9,281.4 327.0,282.9 327.1,284.3 327.2,285.7 327.3,287.1 327.4,288.6 327.5,290.0 327.6,291.4 327.7,292.9 327.8,294.3 327.9,295.7 328.0,297.1 328.1,298.6 328.2,300.0 328.3,301.4 328.5,302.9 328.6,304.3 328.7,305.7 328.9,307.2 329.0,308.6 329.2,310.0 329.3,311.4 329.5,312.9 329.6,314.3 329.8,315.7 330.0,317.1 330.1,318.6 330.3,320.0 336.9,362.2 343.7,424.4 348.4,483.5 352.1,533.3 355.0,580.4 355.2,581.9 355.4,583.5 355.6,585.2 355.9,587.0 356.2,588.8 356.5,590.6 356.8,592.3 357.1,593.9 357.5,595.3 357.8,596.4 358.1,597.3 358.4,597.9 358.7,598.1 359.0,597.9 359.2,597.3 359.5,596.4 359.8,595.2 360.0,593.8 360.3,592.2 360.6,590.4 360.8,588.6 361.1,586.8 361.3,584.9 361.6,583.2 361.8,581.5 362.0,580.0 362.2,578.6 362.4,577.1 362.6,575.7 362.8,574.3 362.9,572.9 363.1,571.4 363.2,570.0 363.4,568.5 363.6,567.1 363.7,565.7 363.9,564.2 364.0,562.8 364.2,561.4 364.4,560.0 364.6,558.5 364.8,557.1 365.1,555.7 365.3,554.3 365.6,552.9 365.8,551.3 366.1,549.5 366.4,547.8 366.7,546.0 367.1,544.3 367.5,542.7 367.9,541.3 368.3,540.1 368.8,539.2 369.3,538.6 369.9,538.4 370.7,538.8 371.8,539.7 372.9,540.9 373.7,542.1 374.3,543.2 374.9,544.4 375.5,545.7 376.0,547.0 376.4,548.3 376.9,549.7 377.3,551.1 377.7,552.5 378.1,553.9 378.5,555.3 378.9,556.7 379.3,558.0 379.7,559.4 380.2,560.7 380.6,562.1 381.0,563.5 381.3,564.9 381.7,566.2 382.1,567.6 382.6,569.0 383.0,570.3 383.5,571.7 384.0,573.0 384.6,574.3 385.3,575.5 385.9,576.7 386.5,578.0 386.9,579.5 387.3,581.2 387.6,583.0 388.0,584.5 388.3,585.6 388.6,586.0 388.9,585.4 389.1,583.9 389.3,582.1 389.6,580.6 390.0,580.0 390.9,581.0 392.0,582.0 392.6,581.5 393.1,580.1 393.5,578.4 393.9,576.7 394.4,575.3 395.1,574.8 396.1,575.4 397.0,576.0 397.6,575.6 398.1,574.4 398.4,572.8 398.7,570.8 399.0,568.8 399.3,566.8 399.7,565.2 400.1,564.0 400.7,563.6 401.6,564.3 402.5,565.0 403.3,564.5 404.0,563.2 404.5,561.5 405.1,559.6 405.7,557.9 406.4,556.6 407.3,556.1 408.6,556.3 410.0,556.5 411.1,555.9 412.0,554.6 412.9,553.4 413.8,552.8 414.6,553.3 415.3,554.3 416.1,555.6 417.0,556.5 418.1,557.0 419.3,557.5 420.3,558.0 420.9,558.9 421.4,560.1 421.9,561.4 422.4,562.6 423.0,563.5 424.2,564.2 425.7,564.8 426.9,565.5 427.7,566.5 428.3,567.7 428.9,569.1 429.4,570.5 430.0,571.8 430.7,573.0 431.5,573.9 432.7,574.5 434.0,575.0 435.0,576.1 435.8,577.6 436.6,579.2 437.3,580.7 438.1,581.9 439.0,582.3 439.9,582.0 441.0,581.1 442.0,580.0 443.0,579.0 443.9,578.0 444.9,577.0 445.7,575.9 446.5,574.8 447.3,573.5 448.0,571.9 448.7,570.2 449.4,568.5 450.1,566.9 450.7,565.4 451.3,564.3 451.9,563.5 452.4,563.2 452.9,563.5 453.3,564.2 453.8,565.3 454.2,566.7 454.6,568.3 455.0,570.0 455.3,571.8 455.6,573.4 455.8,574.8 456.0,576.2 456.1,577.6 456.3,579.1 456.4,580.5 456.5,582.0 456.6,583.4 456.8,584.9 456.9,586.3 456.9,587.8 457.0,589.2 457.1,590.7 457.2,592.2 457.3,593.6 457.3,595.1 457.4,596.5 457.5,598.0 457.5,599.4 457.6,600.9 459.0,645.7 459.0,647.2 459.1,648.7 459.1,650.2 459.1,651.7 459.1,653.2 459.2,654.6 459.2,656.1 459.2,657.6 459.2,659.1 459.2,660.6 459.3,662.1 459.3,663.6 459.3,665.1 459.3,666.6 459.3,668.1 459.4,669.6 459.4,671.1 459.4,672.5 459.4,674.0 459.4,675.5 459.5,677.0 459.5,678.5 459.5,680.0 459.5,681.4 459.5,682.9 459.6,684.3 459.6,685.8 459.6,687.2 459.6,688.7 459.6,690.1 459.6,691.6 459.7,693.0 459.7,694.4 459.7,695.9 459.7,697.3 459.7,698.8 459.7,700.2 459.8,701.7 459.8,703.1 459.8,704.6 459.8,706.0 460.5,704.7 462.4,699.8 464.3,686.1 465.5,682.3 466.7,676.1 468.0,684.8 469.2,693.5 470.5,691.0 471.7,699.8 472.6,692.3 473.6,707.2 474.6,679.9 475.4,697.3 476.3,691.0 477.3,699.8 478.3,693.5 479.2,709.7 480.0,697.3 481.0,704.7 482.0,719.0 482.9,709.7 483.8,697.3 484.8,688.6 485.8,692.3 487.0,699.8 488.5,708.5 489.8,714.7 490.4,709.7 491.2,717.2 492.2,708.5 493.5,704.7 494.4,697.3 495.3,712.2 496.2,708.5 497.0,714.7 497.5,710.9 498.5,717.8 499.7,719.0 500.9,718.2 502.2,719.0 504.1,719.0 504.7,710.9 505.5,702.2 506.3,710.9 507.2,717.2 508.4,719.0 510.9,719.0 511.9,713.4 512.8,709.7 513.6,714.7 514.6,719.0 515.4,712.2 516.1,708.5 516.9,704.7 517.7,696.3 518.4,708.5 519.1,706.0 519.9,712.2 520.6,715.9 521.5,713.4 522.3,717.2 523.1,719.0 530.2,719.0 531.8,714.3 533.0,718.4 534.5,719.0 544.5,719.0 545.7,713.4 547.0,715.9 548.5,705.3 549.5,713.4 550.2,719.0 551.0,719.5 617.1,719.5 617.6,716.1 618.1,712.8 618.6,716.1 619.1,719.5 641.4,719.5 641.9,718.2 642.4,717.0 642.9,718.2 643.4,719.5 653.8,719.5 654.3,717.0 654.8,714.4 655.3,717.0 655.8,719.5 681.8,719.5 682.3,717.8 682.8,716.0 683.3,717.8 683.8,719.5 742.5,719.5 743.0,716.2 743.5,713.0 744.0,716.2 744.5,719.5 767.5,719.5 768.0,715.2 768.5,711.0 769.0,715.2 769.5,719.5 770.4,719.5 770.9,712.8 771.4,706.1 771.9,712.8 772.4,719.5 793.3,719.5 793.8,717.2 794.3,715.0 794.8,717.2 795.3,719.5 803.5,719.5 804.0,714.6 804.5,709.8 805.0,714.6 805.5,719.5 810.2,719.5 810.7,715.2 811.2,710.9 811.7,715.2 812.2,719.5 817.5,719.5 818.0,713.6 818.5,707.7 819.0,713.6 819.5,719.5 819.4,719.5 819.9,707.4 820.4,695.2 820.9,707.4 821.4,719.5 839.5,719.5 840.0,716.7 840.5,713.9 841.0,716.7 841.5,719.5 865.6,719.5 866.1,714.6 866.6,709.8 867.1,714.6 867.6,719.5 916.1,719.5 916.6,718.2 917.1,717.0 917.6,718.2 918.1,719.5 956.4,719.5 956.9,712.8 957.4,706.1 957.9,712.8 958.4,719.5 1001.4,719.5 1001.9,715.1 1002.4,710.8 1002.9,715.1 1003.4,719.5 1004.5,719.5 1005.0,717.5 1005.5,715.4 1006.0,717.5 1006.5,719.5 1011.5,719.5" fill="none" stroke="#00a0a4" stroke-width="1" stroke-linejoin="round" shape-rendering="crispEdges"/>
<polyline points="91.6,719.5 201.8,719.5 201.9,719.3 201.9,718.8 202.0,717.9 202.0,716.8 202.0,715.4 202.1,713.9 202.1,712.2 202.1,710.4 202.2,708.6 202.2,706.7 202.2,704.9 202.2,703.1 202.3,701.5 202.3,700.0 204.0,560.0 206.0,400.0 208.5,300.0 208.5,298.6 208.6,297.1 208.6,295.7 208.7,294.3 208.7,292.9 208.8,291.4 208.9,290.0 208.9,288.6 209.0,287.1 209.0,285.7 209.1,284.3 209.2,282.9 209.2,281.4 209.3,280.0 209.4,278.5 209.5,277.1 209.5,275.6 209.6,274.1 209.7,272.6 209.8,271.2 209.9,269.7 210.0,268.2 210.1,266.8 210.2,265.3 210.3,263.8 210.4,262.3 210.5,260.9 210.7,259.4 210.8,257.9 210.9,256.5 211.0,255.0 211.1,253.5 211.2,252.1 211.3,250.6 211.5,249.1 211.6,247.6 211.7,246.2 211.8,244.7 211.9,243.2 212.0,241.7 212.1,240.2 212.2,238.6 212.3,237.1 212.4,235.6 212.5,234.1 212.6,232.6 212.8,231.2 213.0,229.8 213.3,228.6 213.8,227.4 214.5,226.2 215.3,225.0 216.2,223.9 217.0,222.7 217.9,221.6 218.6,220.4 219.3,219.1 219.9,217.7 220.5,216.3 221.2,214.9 221.8,213.5 222.5,212.3 223.3,211.3 224.2,210.5 225.1,210.0 226.3,209.6 227.5,209.2 228.8,208.9 230.0,208.5 231.2,208.1 232.4,207.8 233.7,207.5 234.9,207.1 236.0,206.7 237.1,206.1 238.1,205.4 239.1,204.6 240.1,203.8 241.1,203.1 242.2,202.4 243.4,201.7 244.6,201.0 245.9,200.5 247.2,200.3 248.7,200.3 250.1,200.3 251.6,200.3 252.9,200.6 254.2,201.2 255.5,201.8 256.9,202.4 258.3,203.0 259.7,203.3 260.7,203.1 261.8,202.6 262.8,202.4 263.7,202.9 264.6,203.3 265.8,203.1 267.1,202.8 268.3,202.3 269.6,202.0 270.8,201.8 272.1,202.1 273.4,202.7 274.6,203.5 275.8,204.3 276.9,205.0 277.9,205.8 279.0,206.7 280.0,207.5 281.1,208.4 282.2,209.4 283.3,210.3 284.5,211.1 285.7,211.7 287.0,212.2 288.3,212.7 289.5,213.3 290.5,214.0 291.5,214.9 292.4,215.8 293.2,216.7 294.1,217.7 294.9,218.8 295.7,219.9 296.3,221.0 296.8,222.2 297.2,223.6 297.5,224.9 297.8,226.3 298.2,227.6 298.5,229.0 298.9,230.4 299.2,231.7 299.6,233.1 299.9,234.5 300.3,235.8 300.7,237.2 301.1,238.6 301.6,240.0 302.1,241.3 302.6,242.7 303.1,244.1 303.6,245.4 304.0,246.8 304.4,248.2 304.7,249.5 305.1,250.7 305.4,252.0 305.7,253.3 305.9,254.5 306.1,255.8 306.3,257.1 306.4,258.5 306.5,259.9 306.6,261.4 306.7,262.8 306.8,264.2 306.9,265.6 307.0,267.1 307.1,268.5 307.1,270.0 307.2,271.4 307.2,272.8 307.3,274.3 307.4,275.7 307.4,277.1 307.5,278.6 307.5,280.0 307.5,281.4 307.6,282.9 307.6,284.3 307.7,285.7 307.7,287.1 307.7,288.6 307.8,290.0 307.8,291.4 307.8,292.9 307.9,294.3 307.9,295.7 307.9,297.1 308.0,298.6 308.0,300.0 309.5,346.0 311.0,450.0 312.0,600.0 313.2,719.5 551.0,719.5" fill="none" stroke="#e272f6" stroke-width="1" stroke-linejoin="round" shape-rendering="crispEdges"/>
<polyline points="91.6,131.5 207.4,131.5 207.6,200.0 208.4,280.0 208.4,281.4 208.4,282.9 208.4,284.3 208.4,285.7 208.4,287.1 208.4,288.6 208.4,290.0 208.4,291.4 208.4,292.9 208.4,294.3 208.4,295.7 208.4,297.1 208.4,298.6 208.4,300.0 210.9,550.0 211.0,551.4 211.1,552.9 211.3,554.3 211.4,555.7 211.6,557.1 211.7,558.6 211.8,560.0 212.5,600.0 213.7,655.0 213.8,656.5 214.1,658.1 214.4,659.8 214.8,661.4 215.2,662.7 215.6,663.7 216.0,664.0 216.4,663.5 216.7,662.1 217.1,660.2 217.5,658.1 217.8,656.2 218.1,654.8 218.4,654.3 218.6,654.6 218.9,655.5 219.1,656.7 219.3,658.3 219.4,660.0 219.6,661.8 219.8,663.5 220.0,665.0 220.2,666.6 220.4,668.4 220.5,670.3 220.7,672.1 220.9,673.9 221.1,675.5 221.3,676.8 221.5,677.6 221.7,677.9 222.0,677.5 222.3,676.5 222.6,675.0 223.0,673.3 223.3,671.4 223.7,669.6 224.0,668.0 224.3,666.6 224.7,665.1 225.0,663.7 225.3,662.2 225.7,660.8 226.0,659.4 226.3,657.9 226.5,656.5 226.7,655.0 226.9,653.6 227.0,652.2 227.2,650.7 227.3,649.3 227.4,647.9 227.5,646.5 227.6,645.0 227.7,643.6 227.8,642.2 227.9,640.7 228.0,639.3 228.1,637.9 228.2,636.4 228.3,635.0 228.4,633.6 228.4,632.1 228.5,630.7 228.6,629.3 228.8,627.9 228.9,626.4 229.0,625.0 229.1,623.6 229.3,622.2 229.4,620.7 229.5,619.3 229.7,617.9 229.8,616.5 230.0,615.0 230.1,613.6 230.2,612.2 230.4,610.8 230.6,609.3 230.7,607.9 230.9,606.5 231.1,605.1 231.2,603.7 231.4,602.2 231.6,600.8 231.8,599.4 232.0,598.0 232.2,596.5 232.5,594.7 232.7,592.9 233.0,591.0 233.3,589.1 233.6,587.4 233.8,585.8 234.1,584.4 234.4,583.3 234.7,582.6 235.0,582.4 235.3,582.6 235.6,583.3 235.9,584.4 236.2,585.8 236.4,587.4 236.7,589.1 237.0,591.0 237.3,592.9 237.5,594.7 237.8,596.5 238.0,598.0 238.2,599.4 238.4,600.8 238.6,602.2 238.7,603.7 238.9,605.1 239.1,606.5 239.2,607.9 239.4,609.3 239.5,610.8 239.7,612.2 239.8,613.6 240.0,615.0 240.1,616.5 240.2,617.9 240.4,619.3 240.5,620.7 240.7,622.2 240.8,623.6 241.0,625.0 241.2,626.4 241.3,627.9 241.5,629.3 241.6,630.7 241.8,632.1 242.0,633.6 242.1,635.0 242.3,636.4 242.4,637.9 242.6,639.3 242.7,640.7 242.9,642.2 243.1,643.6 243.2,645.0 243.4,646.4 243.6,647.9 243.8,649.3 243.9,650.7 244.1,652.2 244.3,653.6 244.5,655.0 244.7,656.5 244.9,658.1 245.1,659.9 245.3,661.7 245.6,663.6 245.8,665.4 246.0,667.2 246.3,669.0 246.5,670.6 246.8,672.1 247.0,673.4 247.2,674.5 247.5,675.3 247.7,675.8 247.9,676.0 248.1,675.8 248.3,675.3 248.6,674.5 248.8,673.4 249.0,672.1 249.2,670.6 249.4,669.0 249.6,667.2 249.9,665.4 250.1,663.6 250.3,661.7 250.5,659.9 250.6,658.1 250.8,656.5 251.0,655.0 251.2,653.6 251.3,652.1 251.5,650.7 251.6,649.3 251.8,647.9 251.9,646.4 252.0,645.0 252.2,643.6 252.3,642.1 252.4,640.7 252.6,639.3 252.7,637.9 252.8,636.4 252.9,635.0 253.1,633.6 253.2,632.1 253.4,630.7 253.5,629.3 253.7,627.9 253.8,626.4 254.0,625.0 254.2,623.6 254.4,622.1 254.5,620.7 254.7,619.2 254.9,617.8 255.1,616.3 255.3,614.9 255.5,613.4 255.7,612.0 255.9,610.5 256.1,609.1 256.4,607.7 256.6,606.2 256.9,604.8 257.2,603.4 257.5,602.0 257.9,600.4 258.3,598.6 258.8,596.8 259.3,595.1 259.8,593.6 260.3,592.7 260.7,592.3 261.1,592.6 261.5,593.4 261.9,594.6 262.3,596.2 262.7,597.9 263.1,599.8 263.4,601.7 263.7,603.4 264.0,605.0 264.2,606.4 264.5,607.8 264.7,609.2 264.8,610.7 265.0,612.1 265.2,613.5 265.4,614.9 265.5,616.4 265.7,617.8 265.8,619.2 266.0,620.7 266.1,622.1 266.3,623.5 266.4,625.0 266.5,626.4 266.7,627.8 266.8,629.3 267.0,630.7 267.2,632.1 267.3,633.6 267.5,635.0 267.7,636.5 267.9,638.0 268.0,639.4 268.2,640.9 268.4,642.4 268.6,643.9 268.7,645.4 268.9,646.8 269.1,648.3 269.3,649.8 269.5,651.3 269.7,652.7 269.9,654.2 270.2,655.7 270.4,657.1 270.7,658.6 271.0,660.0 271.3,661.5 271.8,663.3 272.2,665.1 272.8,666.9 273.3,668.5 273.8,669.8 274.2,670.7 274.6,671.0 274.9,670.7 275.2,670.0 275.5,668.9 275.8,667.5 276.1,665.9 276.3,664.1 276.6,662.2 276.8,660.2 277.0,658.3 277.3,656.6 277.5,655.0 277.7,653.6 277.9,652.2 278.1,650.8 278.3,649.4 278.5,648.0 278.7,646.6 278.9,645.2 279.0,643.8 279.2,642.4 279.4,641.0 279.6,639.6 279.8,638.2 280.0,636.8 280.3,635.4 280.5,634.0 280.8,632.4 281.1,630.7 281.4,628.8 281.8,626.9 282.1,625.0 282.5,623.3 282.9,621.9 283.2,620.7 283.6,620.0 283.9,619.7 284.2,619.9 284.5,620.5 284.8,621.5 285.1,622.7 285.3,624.2 285.6,625.8 285.9,627.5 286.1,629.3 286.4,631.1 286.6,632.9 286.8,634.5 287.0,636.0 287.2,637.4 287.4,638.9 287.5,640.3 287.7,641.8 287.8,643.2 288.0,644.7 288.1,646.2 288.2,647.6 288.3,649.1 288.5,650.5 288.6,652.0 288.7,653.4 288.8,654.9 288.9,656.4 289.1,657.8 289.2,659.3 289.3,660.7 289.4,662.2 289.6,663.6 289.7,665.1 289.8,666.5 290.0,668.0 290.2,669.5 290.3,671.2 290.5,673.0 290.7,674.9 290.8,676.8 291.0,678.8 291.2,680.7 291.4,682.6 291.6,684.5 291.8,686.3 291.9,688.0 292.1,689.5 292.3,690.9 292.5,692.1 292.7,693.1 292.9,693.8 293.1,694.2 293.3,694.4 293.5,694.2 293.7,693.7 293.9,692.8 294.1,691.7 294.3,690.3 294.5,688.8 294.7,687.1 294.9,685.4 295.1,683.5 295.3,681.7 295.5,679.9 295.7,678.1 295.8,676.5 296.0,675.0 296.2,673.5 296.3,672.1 296.5,670.6 296.6,669.1 296.8,667.7 296.9,666.2 297.1,664.7 297.2,663.2 297.4,661.8 297.5,660.3 297.6,658.8 297.8,657.4 297.9,655.9 298.1,654.4 298.2,652.9 298.3,651.5 298.5,650.0 298.7,648.5 298.8,647.1 299.0,645.6 299.1,644.1 299.3,642.7 299.4,641.2 299.6,639.7 299.8,638.3 299.9,636.8 300.1,635.3 300.3,633.9 300.4,632.4 300.6,630.9 300.8,629.5 301.0,628.0 301.2,626.6 301.4,625.1 301.7,623.7 301.9,622.3 302.2,620.9 302.4,619.4 302.7,618.0 303.0,616.6 303.2,615.2 303.5,613.7 303.7,612.3 303.9,610.9 304.1,609.5 304.3,608.0 304.4,606.6 304.5,605.2 304.6,603.7 304.7,602.3 304.8,600.9 304.9,599.4 304.9,598.0 305.0,596.5 305.1,595.1 305.1,593.7 305.2,592.2 305.3,590.8 305.3,589.3 305.4,587.9 305.4,586.4 305.5,585.0 305.6,583.5 305.6,582.1 305.7,580.6 305.7,579.1 305.8,577.6 305.8,576.2 305.9,574.7 305.9,573.2 306.0,571.8 306.0,570.3 306.1,568.8 306.1,567.4 306.2,565.9 306.2,564.4 306.2,562.9 306.3,561.5 306.3,560.0 307.0,500.0 308.0,400.0 308.0,300.0 309.4,250.0 310.0,131.5 1011.5,131.5" fill="none" stroke="#44f030" stroke-width="1" stroke-linejoin="round" shape-rendering="crispEdges"/>
<path d="M81.8 125 L91.8 131.3 L81.8 137.8Z" fill="#00a0a4"/><path d="M1022.3 124.7 L1011.3 131.3 L1022.3 138Z" fill="#00a0a4"/><path d="M1022.5 712.8 L1011.2 719.3 L1022.5 726Z" fill="#44f030"/>
<path d="M218.4 639.6L208.7 655.1H228.1Z" fill="none" stroke="#a36a00" stroke-width="1" shape-rendering="crispEdges"/><text x="218.7" y="675.2" text-anchor="middle" fill="#a36a00">1</text>
<path d="M304.4 636.0L294.7 651.5H314.1Z" fill="none" stroke="#a36a00" stroke-width="1" shape-rendering="crispEdges"/><text x="304.7" y="671.6" text-anchor="middle" fill="#a36a00">2</text>
<path d="M379.3 651.3L369.6 666.8H389.0Z" fill="none" stroke="#a36a00" stroke-width="1" shape-rendering="crispEdges"/><text x="379.6" y="686.9" text-anchor="middle" fill="#a36a00">3</text>
<path d="M448.1 681.1L438.4 696.6H457.8Z" fill="none" stroke="#a36a00" stroke-width="1" shape-rendering="crispEdges"/><text x="448.4" y="716.7" text-anchor="middle" fill="#a36a00">4</text>
<path d="M470.8 712.0L461.1 727.5H480.5Z" fill="none" stroke="#a36a00" stroke-width="1" shape-rendering="crispEdges"/><text x="471.1" y="747.6" text-anchor="middle" fill="#a36a00">5</text>
<path d="M540.1 675.7L530.4 691.2H549.8Z" fill="none" stroke="#a36a00" stroke-width="1" shape-rendering="crispEdges"/><text x="540.4" y="711.3" text-anchor="middle" fill="#a36a00">6</text>
<path d="M679.1 589.6L669.4 605.1H688.8Z" fill="none" stroke="#a36a00" stroke-width="1" shape-rendering="crispEdges"/><text x="679.4" y="625.2" text-anchor="middle" fill="#a36a00">7</text>
<path d="M781.8 675.2L772.1 659.7H791.5Z" fill="none" stroke="#a36a00" stroke-width="1" shape-rendering="crispEdges"/><text x="782.1" y="655.4" text-anchor="middle" fill="#a36a00">8</text>
<path d="M218.6 220.4L208.9 235.9H228.3Z" fill="none" stroke="#e272f6" stroke-width="1" shape-rendering="crispEdges"/><text x="218.9" y="256.0" text-anchor="middle" fill="#e272f6">1</text>
<path d="M304.4 248.2L294.7 263.7H314.1Z" fill="none" stroke="#e272f6" stroke-width="1" shape-rendering="crispEdges"/><text x="304.7" y="283.8" text-anchor="middle" fill="#e272f6">2</text>
<path d="M378.9 719.5L369.2 735.0H388.6Z" fill="none" stroke="#e272f6" stroke-width="1" shape-rendering="crispEdges"/><text x="379.2" y="755.1" text-anchor="middle" fill="#e272f6">3</text>
<path d="M448.1 719.5L438.4 735.0H457.8Z" fill="none" stroke="#e272f6" stroke-width="1" shape-rendering="crispEdges"/><text x="448.4" y="755.1" text-anchor="middle" fill="#e272f6">4</text>
<path d="M470.8 719.5L461.1 735.0H480.5Z" fill="none" stroke="#e272f6" stroke-width="1" shape-rendering="crispEdges"/><text x="471.1" y="755.1" text-anchor="middle" fill="#e272f6">5</text>
<path d="M782.0 719.5L772.3 704.0H791.7Z" fill="none" stroke="#e272f6" stroke-width="1" shape-rendering="crispEdges"/><text x="782.3" y="699.7" text-anchor="middle" fill="#e272f6">8</text>
<path d="M218.6 135.4L208.9 119.9H228.3Z" fill="none" stroke="#00a0a4" stroke-width="1" shape-rendering="crispEdges"/><text x="218.9" y="115.6" text-anchor="middle" fill="#00a0a4">1</text>
<path d="M304.4 136.9L294.7 152.4H314.1Z" fill="none" stroke="#00a0a4" stroke-width="1" shape-rendering="crispEdges"/><text x="304.7" y="172.5" text-anchor="middle" fill="#00a0a4">2</text>
<path d="M379.3 558.0L369.6 573.5H389.0Z" fill="none" stroke="#00a0a4" stroke-width="1" shape-rendering="crispEdges"/><text x="379.6" y="593.6" text-anchor="middle" fill="#00a0a4">3</text>
<path d="M447.9 572.0L438.2 587.5H457.6Z" fill="none" stroke="#00a0a4" stroke-width="1" shape-rendering="crispEdges"/><text x="448.2" y="607.6" text-anchor="middle" fill="#00a0a4">4</text>
<path d="M470.8 693.0L461.1 708.5H480.5Z" fill="none" stroke="#00a0a4" stroke-width="1" shape-rendering="crispEdges"/><text x="471.1" y="728.6" text-anchor="middle" fill="#00a0a4">5</text>
<path d="M540.1 719.5L530.4 735.0H549.8Z" fill="none" stroke="#00a0a4" stroke-width="1" shape-rendering="crispEdges"/><text x="540.4" y="755.1" text-anchor="middle" fill="#00a0a4">6</text>
<path d="M677.8 719.5L668.1 735.0H687.5Z" fill="none" stroke="#00a0a4" stroke-width="1" shape-rendering="crispEdges"/><text x="678.1" y="755.1" text-anchor="middle" fill="#00a0a4">7</text>
<path d="M782.0 719.5L772.3 735.0H791.7Z" fill="none" stroke="#00a0a4" stroke-width="1" shape-rendering="crispEdges"/><text x="782.3" y="755.1" text-anchor="middle" fill="#00a0a4">8</text>
<path d="M218.4 654.3L208.7 669.8H228.1Z" fill="none" stroke="#44f030" stroke-width="1" shape-rendering="crispEdges"/><text x="218.7" y="689.9" text-anchor="middle" fill="#44f030">1</text>
<path d="M304.4 606.6L294.7 622.1H314.1Z" fill="none" stroke="#44f030" stroke-width="1" shape-rendering="crispEdges"/><text x="304.7" y="642.2" text-anchor="middle" fill="#44f030">2</text>
<path d="M378.9 131.5L369.2 147.0H388.6Z" fill="none" stroke="#44f030" stroke-width="1" shape-rendering="crispEdges"/><text x="379.2" y="167.1" text-anchor="middle" fill="#44f030">3</text>
<path d="M448.0 131.5L438.3 147.0H457.7Z" fill="none" stroke="#44f030" stroke-width="1" shape-rendering="crispEdges"/><text x="448.3" y="167.1" text-anchor="middle" fill="#44f030">4</text>
<path d="M471.3 131.5L461.6 147.0H481.0Z" fill="none" stroke="#44f030" stroke-width="1" shape-rendering="crispEdges"/><text x="471.6" y="167.1" text-anchor="middle" fill="#44f030">5</text>
<path d="M540.4 131.5L530.7 147.0H550.1Z" fill="none" stroke="#44f030" stroke-width="1" shape-rendering="crispEdges"/><text x="540.7" y="167.1" text-anchor="middle" fill="#44f030">6</text>
<path d="M678.2 131.5L668.5 147.0H687.9Z" fill="none" stroke="#44f030" stroke-width="1" shape-rendering="crispEdges"/><text x="678.5" y="167.1" text-anchor="middle" fill="#44f030">7</text>
<path d="M782.0 131.5L772.3 116.0H791.7Z" fill="none" stroke="#44f030" stroke-width="1" shape-rendering="crispEdges"/><text x="782.3" y="111.7" text-anchor="middle" fill="#44f030">8</text>
</g></svg>
<div id="mp"><div id="mpl"></div><div id="mpr"></div>
<div class="abs" style="left:154px;top:30px;width:90px;height:70px;background:#84848f"></div>
<div class="tab" style="top:36px;height:64px"><span style="top:16px">Marker</span><span style="top:33.7px">1-7</span></div>
<div class="abs" style="left:154px;top:99.5px;width:90px;height:59.5px;background:#35352f;border-radius:7px 0 0 0;"></div>
<div class="abs" style="left:155.5px;top:101px;width:88.5px;height:56.5px;background:#5b5b5b;border-radius:7px 0 0 0;"></div>
<div class="tab" style="top:101px;height:56.5px"><span style="top:10.9px">Marker</span><span style="top:28.6px">8-15</span></div>
<div class="abs" style="left:154px;top:157.0px;width:90px;height:62.0px;background:#35352f;"></div>
<div class="abs" style="left:155.5px;top:158.5px;width:88.5px;height:59.0px;background:#5b5b5b;"></div>
<div class="tab" style="top:158.5px;height:59.0px"><span style="top:12.5px">Marker</span><span style="top:30.3px">Setup</span></div>
<div class="abs" style="left:154px;top:217.0px;width:90px;height:63.0px;background:#35352f;"></div>
<div class="abs" style="left:155.5px;top:218.5px;width:88.5px;height:60.0px;background:#5b5b5b;"></div>
<div class="tab" style="top:218.5px;height:60.0px"><span style="top:13.3px">Marker <b style="font-family:DejaVu Sans,sans-serif;font-size:17px;line-height:16px;font-weight:bold">→</b></span><span style="top:31.2px">Functions</span></div>
<div class="abs" style="left:154px;top:279.5px;width:1.5px;height:437px;background:#45453f"></div>
<div class="led" style="top:46.2px"><i></i></div><div class="mb foc" style="top:46.2px"><div class="n">Marker 1</div><div class="v">1.71 GHz</div></div>
<div class="led" style="top:130.2px"><i></i></div><div class="mb" style="top:130.2px"><div class="n">Marker 2</div><div class="v">1.785 GHz</div></div>
<div class="led" style="top:214.3px"><i></i></div><div class="mb" style="top:214.3px"><div class="n">Marker 3</div><div class="v">1.85 GHz</div></div>
<div class="led" style="top:298.3px"><i></i></div><div class="mb" style="top:298.3px"><div class="n">Marker 4</div><div class="v">1.91 GHz</div></div>
<div class="led" style="top:382.4px"><i></i></div><div class="mb" style="top:382.4px"><div class="n">Marker 5</div><div class="v">1.93 GHz</div></div>
<div class="led" style="top:466.4px"><i></i></div><div class="mb" style="top:466.4px"><div class="n">Marker 6</div><div class="v">1.99 GHz</div></div>
<div class="led" style="top:550.5px"><i></i></div><div class="mb" style="top:550.5px"><div class="n">Marker 7</div><div class="v">2.11 GHz</div></div>
<div class="led" style="top:634.6px"><i class="off"></i></div><div class="mb" style="top:634.6px"><div class="n">Reference</div><div class="v">---</div></div>
<div id="mph"><span class="t">Marker</span><div id="mpx"><i></i><svg width="20" height="21" viewBox="0 0 20 21" style="position:absolute;left:0;top:0"><path d="M5.4 7 L14.6 15.8 M14.6 7 L5.4 15.8" stroke="#fff" stroke-width="2.1"/></svg></div></div>
</div>
<div id="wm"><span style="letter-spacing:-0.7px">ww</span><span style="letter-spacing:15.5px">w</span><span style="letter-spacing:5.7px">.</span><span style="letter-spacing:3.5px">xah</span>xmicrowave.com</div>
<div class="sb" style="left:4.5px;top:756px;width:51.0px">Tr 2</div>
<div class="sb" style="left:60.3px;top:756px;width:58.0px">Ch 1</div>
<div class="sb" style="left:123.2px;top:756px;width:67.3px">IntTrig</div>
<div class="sb" style="left:195.5px;top:756px;width:57.7px">Swp</div>
<div class="sb" style="left:258.1px;top:756px;width:70.2px">BW=10k</div>
<div class="sb" style="left:333.3px;top:756px;width:82.2px">C* 2-Port</div>
<div class="sb dis" style="left:420.6px;top:756px;width:63.7px">SrcCal</div>
<div class="sb dis" style="left:489.4px;top:756px;width:50.8px">Sim</div>
<div class="sb dis" style="left:545.3px;top:756px;width:58.1px">Pulse</div>
<div class="sb" style="left:608.4px;top:756px;width:671.1px"></div>
<div class="sb dis" style="left:4.5px;top:780px;width:44.8px">Svc</div>
<div class="sb" style="left:54.4px;top:780px;width:57.5px">RFOn</div>
<div class="sb" style="left:116.8px;top:780px;width:70.6px">UpdateOn</div>
<div class="sb" style="left:191.9px;top:780px;width:57.6px">IntRef</div>
<div class="sb" style="left:254.6px;top:780px;width:854.4px"></div>
<div class="sb" style="left:1115px;top:780px;width:44.0px"></div>
<div class="sb" style="left:1165px;top:780px;width:114.5px"></div>
</body></html>
